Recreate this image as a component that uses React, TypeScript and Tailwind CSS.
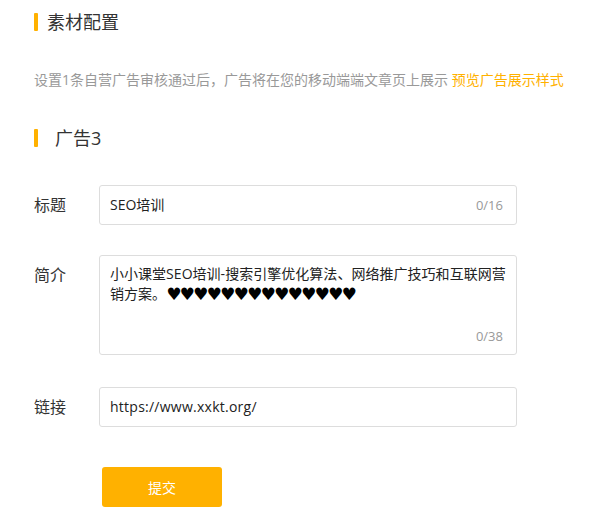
export default function App() {
  return (
    <div className="min-h-screen bg-white pl-[34px] font-['Open_Sans','Noto_Sans_CJK_SC',sans-serif] text-[#333]">
      <div className="h-[44px] pt-[13px]">
        <div className="flex h-[18px] items-center">
          <span className="h-[18px] w-[4px] rounded-[1px] bg-[#ffb100]" />
          <h2 className="ml-[9px] text-[18px] leading-[18px] font-normal">素材配置</h2>
        </div>
      </div>

      <p className="mt-[26px] h-[20px] text-[14px] leading-[20px] text-[#999]">
        设置1条自营广告审核通过后，广告将在您的移动端端文章页上展示 <a className="text-[#ffb100]">预览广告展示样式</a>
      </p>

      <div className="mt-[39px] flex h-[18px] items-center">
        <span className="h-[18px] w-[4px] rounded-[1px] bg-[#ffb100]" />
        <h3 className="ml-[17px] text-[18px] leading-[18px] font-normal">广告3</h3>
      </div>

      <div className="mt-[38px] flex h-[40px] items-center">
        <label className="w-[65px] text-[16px] leading-[40px]">标题</label>
        <div className="relative h-[40px] w-[418px]">
          <input
            readOnly
            value="SEO培训"
            className="h-full w-full rounded-[3px] border border-[#ddd] px-[10px] pb-[2px] text-[14px] text-[#222] outline-none"
          />
          <span className="absolute top-[11px] right-[14px] text-[13px] leading-[18px] text-[#999]">0/16</span>
        </div>
      </div>

      <div className="mt-[30px] flex h-[100px] items-start">
        <label className="w-[65px] pt-[9px] text-[16px] leading-[22px]">简介</label>
        <div className="relative h-[100px] w-[418px]">
          <div className="h-full w-full rounded-[3px] border border-[#ddd] px-[10px] py-[8px] text-[14px] leading-[20px] tracking-[0.03px] text-[#222]">
            小小课堂SEO培训-搜索引擎优化算法、网络推广技巧和互联网营销方案。
            <span className="align-[-1px] font-['DejaVu_Sans'] text-[17px] leading-[14px] tracking-[-1.75px] text-black">♥♥♥♥♥♥♥♥♥♥♥♥♥♥</span>
          </div>
          <span className="absolute right-[14px] bottom-[10px] text-[13px] leading-[18px] text-[#999]">0/38</span>
        </div>
      </div>

      <div className="mt-[32px] flex h-[40px] items-center">
        <label className="w-[65px] text-[16px] leading-[40px]">链接</label>
        <input
          readOnly
          value="https://www.xxkt.org/"
          className="h-[40px] w-[418px] rounded-[3px] border border-[#ddd] px-[10px] pb-[2px] text-[14px] tracking-[0.25px] text-[#222] outline-none"
        />
      </div>

      <button className="mt-[40px] ml-[68px] block h-[40px] w-[120px] rounded-[3px] bg-[#ffb100] text-[14px] text-white">
        提交
      </button>
    </div>
  )
}
